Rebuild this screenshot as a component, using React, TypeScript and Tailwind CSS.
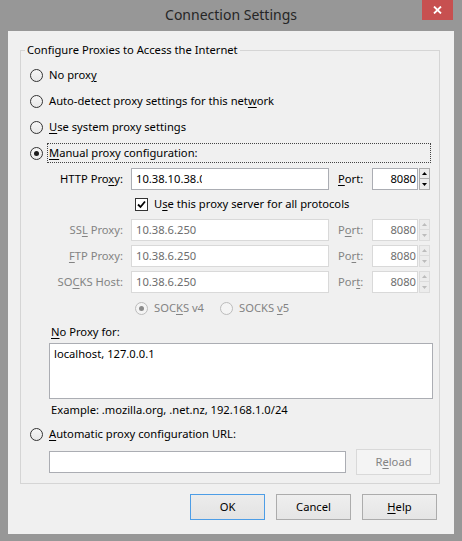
import type { ReactNode } from "react";

function U({ children }: { children: ReactNode }) {
  return <span className="underline underline-offset-[2px] decoration-1">{children}</span>;
}

function Radio({ checked = false, disabled = false }: { checked?: boolean; disabled?: boolean }) {
  return (
    <span
      className={
        "flex h-[13px] w-[13px] shrink-0 items-center justify-center rounded-full border bg-gradient-to-b " +
        (disabled ? "border-[#bcbcbc] from-[#f4f4f4] to-[#f4f4f4]" : "border-[#333] from-[#f6f6f6] to-[#e8e8e8]")
      }
    >
      {checked && (
        <span className={"h-[5px] w-[5px] rounded-full " + (disabled ? "bg-[#8b8b8b]" : "bg-[#1a1a1a]")} />
      )}
    </span>
  );
}

function Checkbox() {
  return (
    <span className="flex h-[13px] w-[13px] shrink-0 items-center justify-center border border-[#333] bg-white">
      <svg width="9" height="9" viewBox="0 0 9 9">
        <path d="M1 4.5 L3.5 7 L8 1.5" fill="none" stroke="#000" strokeWidth="1.8" />
      </svg>
    </span>
  );
}

function Field({ value, disabled = false, className = "" }: { value?: ReactNode; disabled?: boolean; className?: string }) {
  return (
    <div
      className={
        "flex h-[22px] items-center border bg-white px-[4px] " +
        (disabled ? "border-[#d9d9d9] text-[#6d6d6d] " : "border-[#abadb3] text-black ") +
        className
      }
    >
      {value}
    </div>
  );
}

function Spinner({ disabled = false }: { disabled?: boolean }) {
  const arrow = disabled ? "#bcbcbc" : "#000";
  const border = disabled ? "border-[#dcdcdc]" : "border-[#acacac]";
  return (
    <div className="ml-px flex h-[22px] w-[11px] flex-col">
      <div className={"flex h-[11px] items-center justify-center border bg-[#ececec] " + border}>
        <svg width="5" height="3" viewBox="0 0 5 3">
          <path d="M0 3 L2.5 0 L5 3 Z" fill={arrow} />
        </svg>
      </div>
      <div className={"flex h-[11px] items-center justify-center border border-t-0 bg-[#ececec] " + border}>
        <svg width="5" height="3" viewBox="0 0 5 3">
          <path d="M0 0 L2.5 3 L5 0 Z" fill={arrow} />
        </svg>
      </div>
    </div>
  );
}

function ProxyRow({
  label,
  port,
  value,
  disabled = false,
  className = "",
}: {
  label: ReactNode;
  port: ReactNode;
  value: ReactNode;
  disabled?: boolean;
  className?: string;
}) {
  const text = disabled ? "text-[#838383]" : "text-black";
  return (
    <div className={"flex h-[22px] items-center " + className}>
      <div className={"w-[93px] text-right " + text}>{label}</div>
      <Field value={value} disabled={disabled} className="ml-[8px] w-[198px]" />
      <div className={"ml-[9px] w-[34px] " + text}>{port}</div>
      <Field value="8080" disabled={disabled} className="w-[46px] justify-end !pr-[1px]" />
      <Spinner disabled={disabled} />
    </div>
  );
}

function Button({ children, focused = false, disabled = false, className = "" }: { children: ReactNode; focused?: boolean; disabled?: boolean; className?: string }) {
  return (
    <div
      className={
        "flex h-[26px] w-[75px] items-center justify-center border " +
        (disabled
          ? "border-[#d9d9d9] bg-[#f4f4f4] text-[#838383] "
          : focused
            ? "border-[#4d9de6] bg-gradient-to-b from-[#ececec] to-[#e3e3e3] "
            : "border-[#acacac] bg-gradient-to-b from-[#efefef] to-[#e5e5e5] ") +
        className
      }
    >
      {children}
    </div>
  );
}

export default function App() {
  return (
    <div className="flex h-[541px] w-[462px] flex-col overflow-hidden bg-[#979797] font-['Noto_Sans',sans-serif] text-[11.2px] leading-[16px] text-black">
      {/* title bar */}
      <div className="flex h-[31px] shrink-0">
        <div className="w-[40px]" />
        <div className="flex flex-1 items-center justify-center pb-px text-[14px] text-[#262626]">Connection Settings</div>
        <div className="flex h-[20px] w-[31px] items-center justify-center bg-[#c75050]">
          <svg width="9" height="8" viewBox="0 0 9 8">
            <path d="M1 0.5 L8 7.5 M8 0.5 L1 7.5" stroke="#fff" strokeWidth="1.8" />
          </svg>
        </div>
        <div className="w-[9px]" />
      </div>

      {/* client area */}
      <div className="ml-[8px] flex h-[503px] w-[446px] flex-col bg-[#f0f0f0]">
        <fieldset className="ml-[12px] mt-[11px] w-[420px] border border-[#d5d5d5] pb-[8px] pl-[9px] pt-[7px]">
          <legend className="-ml-[5px] px-[2px] leading-[16px]">Configure Proxies to Access the Internet</legend>

          <div className="flex h-[20px] items-center">
            <Radio />
            <span className="ml-[6px]">
              No prox<U>y</U>
            </span>
          </div>
          <div className="mt-[6px] flex h-[20px] items-center">
            <Radio />
            <span className="ml-[6px]">
              Auto-detect proxy settings for this net<U>w</U>ork
            </span>
          </div>
          <div className="mt-[6px] flex h-[20px] items-center">
            <Radio />
            <span className="ml-[6px]">
              <U>U</U>se system proxy settings
            </span>
          </div>
          <div className="mt-[6px] flex h-[20px] items-center">
            <Radio checked />
            <span className="ml-[4px] mr-[8px] flex h-[20px] flex-1 items-center border border-dotted border-[#444] pl-px">
              <U>M</U>anual proxy configuration:
            </span>
          </div>

          <ProxyRow
            className="mt-[5px]"
            label={
              <>
                HTTP Pro<U>x</U>y:
              </>
            }
            port={
              <>
                <U>P</U>ort:
              </>
            }
            value={
              <>
                10.38.10.38.
                <span className="inline-block w-[3px] overflow-hidden">0</span>
              </>
            }
          />

          <div className="mt-[4px] flex h-[20px] items-center pl-[105px]">
            <Checkbox />
            <span className="ml-[6px]">
              U<U>s</U>e this proxy server for all protocols
            </span>
          </div>

          <ProxyRow
            className="mt-[5px]"
            disabled
            label={
              <>
                SS<U>L</U> Proxy:
              </>
            }
            port={
              <>
                P<U>o</U>rt:
              </>
            }
            value="10.38.6.250"
          />
          <ProxyRow
            className="mt-[4px]"
            disabled
            label={
              <>
                <U>F</U>TP Proxy:
              </>
            }
            port={
              <>
                Po<U>r</U>t:
              </>
            }
            value="10.38.6.250"
          />
          <ProxyRow
            className="mt-[4px]"
            disabled
            label={
              <>
                SO<U>C</U>KS Host:
              </>
            }
            port={
              <>
                Por<U>t</U>:
              </>
            }
            value="10.38.6.250"
          />

          <div className="mt-[5px] flex h-[20px] items-center pl-[105px] text-[#838383]">
            <div className="flex w-[85px] items-center">
              <Radio checked disabled />
              <span className="ml-[6px]">
                SOC<U>K</U>S v4
              </span>
            </div>
            <Radio disabled />
            <span className="ml-[6px]">
              SOCKS <U>v</U>5
            </span>
          </div>

          <div className="ml-[21px] mt-[6px] h-[16px]">
            <U>N</U>o Proxy for:
          </div>
          <div className="ml-[19px] mt-[3px] h-[56px] w-[384px] border border-[#abadb3] bg-white px-[4px] pt-[2px]">
            localhost, 127.0.0.1
          </div>
          <div className="ml-[21px] mt-[3px] h-[16px]">Example: .mozilla.org, .net.nz, 192.168.1.0/24</div>

          <div className="mt-[6px] flex h-[20px] items-center">
            <Radio />
            <span className="ml-[6px]">
              <U>A</U>utomatic proxy configuration URL:
            </span>
          </div>
          <div className="mt-[5px] flex h-[26px] items-center">
            <Field className="ml-[19px] w-[297px]" />
            <Button disabled className="ml-[10px]">
              R<U>e</U>load
            </Button>
          </div>
        </fieldset>

        <div className="mt-[10px] flex justify-end gap-[11px] pr-[17px]">
          <Button focused>OK</Button>
          <Button>Cancel</Button>
          <Button>
            <U>H</U>elp
          </Button>
        </div>
      </div>
    </div>
  );
}
